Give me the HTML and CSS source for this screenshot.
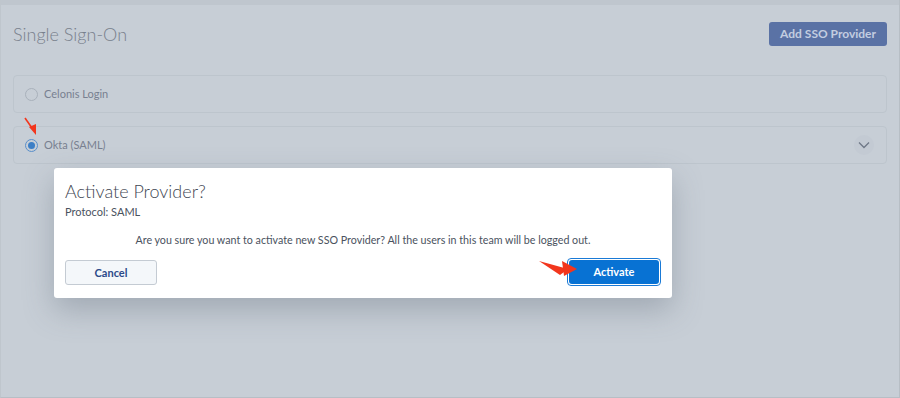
FILE: index.html
```html
<!DOCTYPE html>
<html lang="en">

<head>
    <meta charset="UTF-8">
    <link rel="stylesheet" href="styles.css">
    <title>Single Sign-On</title>
</head>

<body>
    <section class="page">
        <div class="topbar"></div>
        <div class="content">
            <div class="header">
                <h1 class="title">Single Sign-On</h1>
                <div class="add-btn">Add SSO Provider</div>
            </div>
            <div class="providers">
                <div class="provider">
                    <span class="radio"></span>
                    <span class="name">Celonis Login</span>
                </div>
                <div class="provider">
                    <span class="radio checked"></span>
                    <span class="name">Okta (SAML)</span>
                    <span class="chevron">
                        <svg width="12" height="8" viewBox="0 0 12 8"><path d="M1 1.5 L6 6.5 L11 1.5" fill="none" stroke="#6f7887" stroke-width="1.3"/></svg>
                    </span>
                </div>
            </div>
        </div>

        <!-- confirm dialog -->
        <div class="modal">
            <h2 class="modal-title">Activate Provider?</h2>
            <div class="protocol">Protocol: SAML</div>
            <p class="message">Are you sure you want to activate new SSO Provider? All the users in this team will be logged out.</p>
            <div class="actions">
                <div class="cancel">Cancel</div>
                <div class="activate-ring">
                    <div class="activate">Activate</div>
                </div>
            </div>
        </div>

        <svg class="arrow arrow-radio" width="16" height="20" viewBox="0 0 16 20">
            <path d="M1 1 L8 11" stroke="#f2361d" stroke-width="1.6" fill="none"/>
            <path d="M5 10 L12 7 L12 18 Z" fill="#f2361d"/>
        </svg>
        <svg class="arrow arrow-activate" width="42" height="18" viewBox="0 0 42 18">
            <path d="M1 2 L30 10 L22 16 Z" fill="#f2361d"/>
            <path d="M24 2 L39 10 L26 17 Z" fill="#f2361d"/>
        </svg>
    </section>
</body>

</html>
```

FILE: styles.css
```css
* {
    font-family: 'Lato', sans-serif;
    box-sizing: border-box;
}

body {
    margin: 0;
}

.page {
    position: relative;
    width: 900px;
    height: 398px;
    background-color: #c7ced6;
    border-right: 1px solid #b7bec5;
    border-bottom: 1px solid #b7bec5;
    border-left: 1px solid #bfc6cd;
    overflow: hidden;
}

.topbar {
    height: 5px;
    background-color: #bfc6ce;
}

.content {
    padding: 0 12px;
}

.header {
    display: flex;
    justify-content: space-between;
    align-items: center;
    height: 58px;
}

.title {
    margin: 0;
    font-size: 18px;
    font-weight: 300;
    color: #78808c;
    margin-top: -1px;
}

.add-btn {
    background-color: #5a72a5;
    color: #c3cde0;
    font-size: 12px;
    font-weight: 700;
    padding: 0 11px;
    height: 24px;
    line-height: 24px;
    border-radius: 3px;
    margin-top: -1px;
}

.providers {
    display: flex;
    flex-direction: column;
    gap: 13px;
    margin-top: 12px;
}

.provider {
    display: flex;
    align-items: center;
    height: 38px;
    padding: 0 12px 0 11px;
    border: 1px solid #bdc5cd;
    border-radius: 4px;
}

.radio {
    width: 13px;
    height: 13px;
    border-radius: 50%;
    border: 1px solid #a9b1bb;
    margin-right: 6px;
    position: relative;
}

.radio.checked {
    border-color: #5a8fca;
}

.radio.checked::after {
    content: '';
    position: absolute;
    left: 2px;
    top: 2px;
    width: 7px;
    height: 7px;
    border-radius: 50%;
    background-color: #3d7fc6;
}

.name {
    font-size: 11px;
    color: #788090;
    margin-top: -1px;
}

.chevron {
    margin-left: auto;
    width: 20px;
    height: 20px;
    border-radius: 50%;
    background-color: #c3cad3;
    display: flex;
    justify-content: center;
    align-items: center;
}

.modal {
    position: absolute;
    left: 53px;
    top: 168px;
    width: 618px;
    height: 130px;
    background-color: white;
    border-radius: 3px;
    padding: 12px 11px 0 11px;
    box-shadow: 0 12px 30px 0 rgba(90, 100, 115, 0.35);
}

.modal-title {
    margin: 0;
    font-size: 18px;
    font-weight: 300;
    color: #3f4753;
    line-height: 22px;
}

.protocol {
    font-size: 11px;
    color: #4a525e;
    margin-top: 3px;
}

.message {
    margin: 15px 0 0 0;
    font-size: 10.7px;
    color: #4a525e;
    text-align: center;
}

.actions {
    display: flex;
    justify-content: space-between;
    align-items: center;
    margin-top: 12px;
}

.cancel {
    width: 92px;
    height: 25px;
    line-height: 23px;
    text-align: center;
    background-color: #f4f7fa;
    border: 1px solid #c4cbd3;
    border-radius: 3px;
    color: #2c4a89;
    font-size: 11px;
    font-weight: 700;
}

.activate-ring {
    border: 1px solid #1a7ad6;
    border-radius: 4px;
    padding: 1px;
}

.activate {
    width: 90px;
    height: 24px;
    line-height: 24px;
    text-align: center;
    background-color: #0872d3;
    border-radius: 3px;
    color: white;
    font-size: 11px;
    font-weight: 700;
}

.arrow {
    position: absolute;
}

.arrow-radio {
    left: 23px;
    top: 117px;
}

.arrow-activate {
    left: 537px;
    top: 259px;
}
```
